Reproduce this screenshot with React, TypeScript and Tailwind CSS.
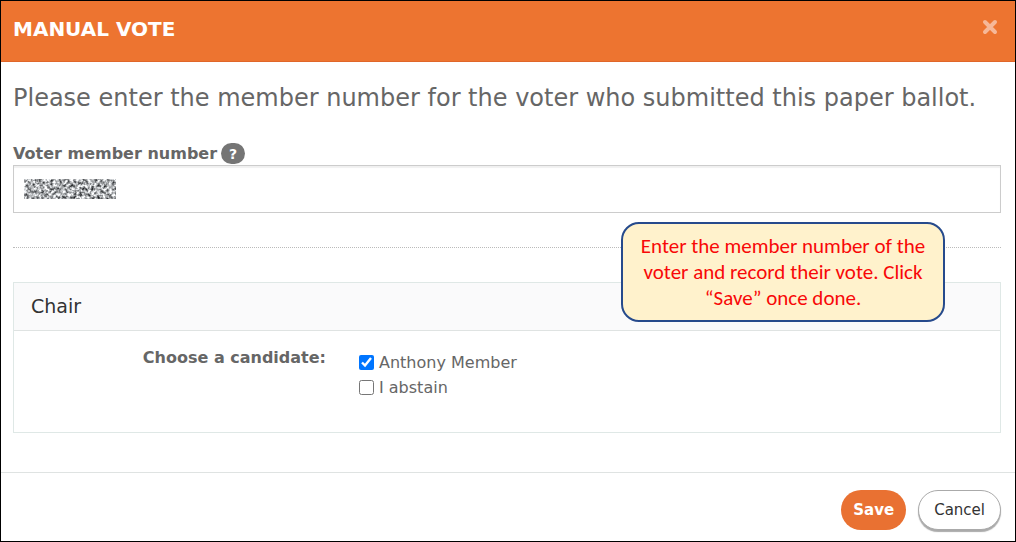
import { useState } from 'react';

const candidates = [
  { id: 'anthony-member', name: 'Anthony Member' },
  { id: 'abstain', name: 'I abstain' },
];

function MaskedNumber() {
  return (
    <svg className="h-5 w-[92px] shrink-0" viewBox="0 0 92 20" aria-hidden="true">
      <filter id="noise" x="0" y="0" width="100%" height="100%" colorInterpolationFilters="sRGB">
        <feTurbulence type="fractalNoise" baseFrequency="0.34" numOctaves="2" seed="7" />
        <feColorMatrix values="1.7 0 0 0 -0.18  1.7 0 0 0 -0.17  1.7 0 0 0 -0.16  0 0 0 0 1" />
      </filter>
      <rect width="92" height="20" filter="url(#noise)" />
    </svg>
  );
}

export default function App() {
  const [selected, setSelected] = useState('anthony-member');
  const [memberNumber, setMemberNumber] = useState('');

  return (
    <div className="flex min-h-screen flex-col border border-black bg-white font-['Verdana','DejaVu_Sans',sans-serif] text-[#666]">
      {/* Header */}
      <header className="flex h-[61px] items-start justify-between border-b border-[#e0662a] bg-[#ed7430] pr-[17px] pl-3">
        <h1 className="pt-[14px] text-xl leading-7 font-bold text-white">MANUAL VOTE</h1>
        <button type="button" aria-label="Close" className="mt-[18px]">
          <svg className="size-4" viewBox="0 0 16 16" fill="none" stroke="#f6b898" strokeWidth="4" strokeLinecap="round">
            <path d="M3 3l10 10M13 3L3 13" />
          </svg>
        </button>
      </header>

      <main className="relative flex-1 pt-5 pr-[14px] pl-3">
        <p className="text-2xl leading-8">
          Please enter the member number for the voter who submitted this paper ballot.
        </p>

        <div className="mt-7 flex h-[23px] items-center gap-1">
          <label htmlFor="member-number" className="text-base leading-6 font-bold">Voter member number</label>
          <button
            type="button"
            aria-label="Help"
            className="flex h-[21px] w-6 items-center justify-center rounded-full bg-[#757575] text-sm font-bold text-white"
          >
            ?
          </button>
        </div>
        <div className="flex h-12 items-center border border-[#ccc] pl-[10px] shadow-[inset_0_2px_1px_rgba(0,0,0,0.06)]">
          <MaskedNumber />
          <input
            id="member-number"
            type="text"
            value={memberNumber}
            onChange={(e) => setMemberNumber(e.target.value)}
            className="h-full min-w-0 flex-1 px-2 outline-none"
          />
        </div>

        <hr className="my-[34px] border-t border-dotted border-[#bbb]" />

        {/* Ballot */}
        <section className="border border-[#dfe8e6]">
          <h2 className="border-b border-[#dfe3e2] bg-[#fafafb] px-[17px] py-[10px] text-[19px] leading-[27px] text-[#333]">Chair</h2>
          <fieldset className="flex h-[101px] pt-[15px]" aria-labelledby="choose">
            <div id="choose" className="w-[312px] text-right text-base leading-6 font-bold">Choose a candidate:</div>
            <div className="pt-1 pl-[33px]">
              {candidates.map((c) => (
                <div key={c.id} className="flex h-[25px] items-center gap-[5px]">
                  <input
                    id={c.id}
                    type="checkbox"
                    checked={selected === c.id}
                    onChange={() => setSelected(c.id)}
                    className="size-[15px]"
                  />
                  <label htmlFor={c.id} className="text-base leading-6">{c.name}</label>
                </div>
              ))}
            </div>
          </fieldset>
        </section>

        <div
          role="note"
          className="absolute top-[160px] right-[70px] w-[324px] rounded-[18px] border-2 border-[#264a8c] bg-[#fff2cc] px-2 py-[9px] text-center font-['Carlito','Lato',sans-serif] text-[21px] leading-[26px] text-[#f80808]"
        >
          Enter the member number of the voter and record their vote. Click “Save” once done.
        </div>
      </main>

      {/* Footer */}
      <footer className="flex h-[69px] items-start justify-end gap-3 border-t border-[#dfe3e2] pt-[17px] pr-[14px]">
        <button type="button" className="h-10 rounded-full bg-[#e97132] px-3 text-[15px] font-bold text-white">
          Save
        </button>
        <button
          type="button"
          className="h-10 rounded-full border border-[#aaa] bg-white px-[15px] text-[15px] text-[#333] shadow-[0_2px_1px_#aaa]"
        >
          Cancel
        </button>
      </footer>
    </div>
  );
}
